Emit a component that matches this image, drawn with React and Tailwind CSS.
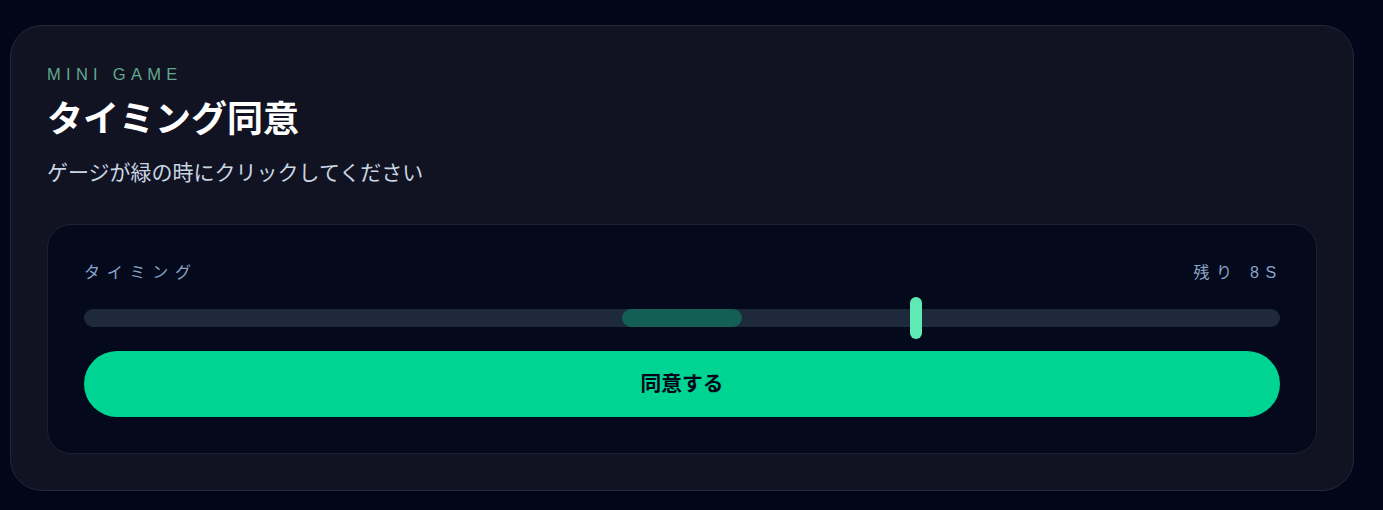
import React from 'react';

const font = { fontFamily: '"Liberation Sans", "Noto Sans CJK JP", sans-serif' };

const TimingBar = ({ zoneLeft, zoneWidth, marker }) => {
  return (
    <div className="relative h-[42px] flex items-center">
      <div className="relative w-full h-[18px] rounded-full bg-[#1e293b]">
        <div
          className="absolute top-0 h-full rounded-full bg-[#135f56]"
          style={{ left: `${zoneLeft}%`, width: `${zoneWidth}%` }}
        />
      </div>
      <div
        className="absolute top-0 h-[42px] w-[12px] rounded-full bg-[#5ee9b5]"
        style={{ left: `calc(${marker}% - 6px)` }}
      />
    </div>
  );
};

const App = () => {
  return (
    <div className="min-h-[510px] bg-[#020618] pt-[25px] pl-[10px]" style={font}>
      <div className="w-[1344px] rounded-[32px] border border-[#23283a] bg-[#111322] p-9">
        <p className="text-[16.5px] leading-6 tracking-[0.32em] text-[#62a88e]">MINI GAME</p>
        <h1 className="mt-[14px] text-[36px] leading-10 font-bold text-white">タイミング同意</h1>
        <p className="mt-[18px] text-[21px] leading-[30px] text-[#cad5e2]">
          ゲージが緑の時にクリックしてください
        </p>

        <div className="mt-9 rounded-3xl border border-[#1b2133] bg-[#040a1b] p-9 flex flex-col gap-3">
          <div className="flex items-center justify-between text-[16px] leading-6 tracking-[0.42em] text-[#8aa4c8]">
            <span>タイミング</span>
            <span className="-mr-[3px]">残り 8S</span>
          </div>
          <TimingBar zoneLeft={45} zoneWidth={10} marker={69.6} />
          <button className="h-[66px] w-full rounded-full bg-[#00d492] text-[20.7px] font-bold text-[#020618]">
            同意する
          </button>
        </div>
      </div>
    </div>
  );
};

export default App;
